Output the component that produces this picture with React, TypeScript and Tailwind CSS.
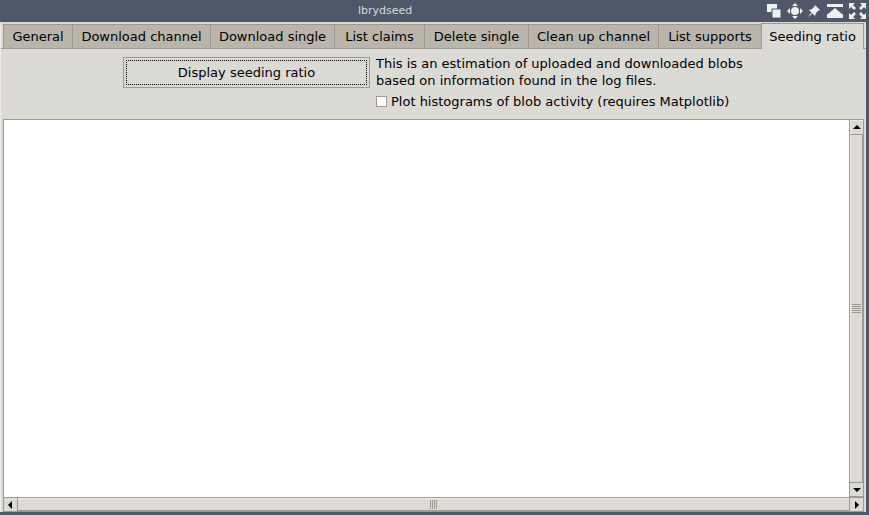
import React from "react";

const tabs = [
  { label: "General", w: 69 },
  { label: "Download channel", w: 138 },
  { label: "Download single", w: 124 },
  { label: "List claims", w: 90 },
  { label: "Delete single", w: 104 },
  { label: "Clean up channel", w: 130 },
  { label: "List supports", w: 103 },
  { label: "Seeding ratio", w: 103, active: true },
];

const TitleIcons = () => (
  <div className="absolute right-[3px] top-[3px] flex items-center gap-[5px]">
    <svg width="16" height="16" viewBox="0 0 16 16">
      <rect x="1" y="1" width="10" height="8" fill="#eef0f2" />
      <rect x="6" y="6" width="9" height="9" fill="#eef0f2" stroke="#4e5868" strokeWidth="1" />
    </svg>
    <svg width="16" height="16" viewBox="0 0 16 16" fill="#eef0f2">
      <circle cx="8" cy="8" r="4" />
      <path d="M8 0 L11 3 H5 Z M8 16 L5 13 H11 Z M0 8 L3 5 V11 Z M16 8 L13 11 V5 Z" />
    </svg>
    <svg width="13" height="14" viewBox="0 0 13 14" fill="#eef0f2">
      <path d="M7 1 L12 6 L10 7 L8 9 L7 12 L1 6 L4 5 L6 3 Z" />
      <path d="M3 9 L0 13 L4 10 Z" />
    </svg>
    <svg width="18" height="16" viewBox="0 0 18 16" fill="#eef0f2">
      <rect x="1" y="1" width="16" height="3" />
      <path d="M9 5 L16 11 H2 Z" />
      <rect x="1" y="11" width="16" height="4" />
    </svg>
    <svg width="17" height="16" viewBox="0 0 17 16" fill="#eef0f2">
      <path d="M0 0 H6 L4 2 L7 5 L5 7 L2 4 L0 6 Z" />
      <path d="M17 0 V6 L15 4 L12 7 L10 5 L13 2 L11 0 Z" />
      <path d="M0 16 V10 L2 12 L5 9 L7 11 L4 14 L6 16 Z" />
      <path d="M17 16 H11 L13 14 L10 11 L12 9 L15 12 L17 10 Z" />
    </svg>
  </div>
);

const Arrow = ({ dir }: { dir: "up" | "down" | "left" | "right" }) => {
  const d = {
    up: "M1 6 L5 2 L9 6 Z",
    down: "M1 3 L9 3 L5 7 Z",
    left: "M6 1 L6 9 L2 5 Z",
    right: "M3 1 L7 5 L3 9 Z",
  }[dir];
  return (
    <svg width="10" height="10" viewBox="0 0 10 10">
      <path d={d} fill="#000" />
    </svg>
  );
};

const App = () => {
  return (
    <div
      className="w-[869px] h-[515px] bg-[#4e5868] flex flex-col overflow-hidden text-[13px] text-black"
      style={{ fontFamily: '"DejaVu Sans", sans-serif' }}
    >
      {/* title bar */}
      <div className="relative h-[22px] shrink-0">
        <span className="absolute left-[358px] top-[4px] text-[11px] leading-[13px] text-[#d4d8de]">
          lbrydseed
        </span>
        <TitleIcons />
      </div>

      {/* window */}
      <div className="w-[866px] h-[490px] bg-[#dcdad5] border-l border-[#eeebe7] flex flex-col">
        {/* tabs */}
        <div className="h-[26px] shrink-0 flex items-end pl-[2px]">
          {tabs.map((t) =>
            t.active ? (
              <div
                key={t.label}
                style={{ width: t.w }}
                className="h-[26px] bg-[#dcdad5] border-t border-l border-r border-[#9e9a91] flex items-center justify-center leading-[16px] relative top-[1px]"
              >
                {t.label}
              </div>
            ) : (
              <div
                key={t.label}
                style={{ width: t.w }}
                className="h-[24px] bg-[#bab5ab] border-t border-l border-[#9e9a91] flex items-center justify-center leading-[16px] pt-[1px]"
              >
                {t.label}
              </div>
            )
          )}
        </div>

        {/* panel */}
        <div className="flex-1 flex flex-col border-t border-[#9e9a91] px-[2px]">
          {/* controls */}
          <div className="h-[70px] shrink-0 flex items-start pl-[120px]">
            <button className="mt-[8px] w-[247px] h-[31px] bg-[#dcdad5] border border-[#9e9a91] p-[2px]">
              <div className="w-full h-full border border-dotted border-black flex items-center justify-center leading-[16px]">
                Display seeding ratio
              </div>
            </button>
            <div className="ml-[6px] mt-[6px] flex flex-col leading-[17px]">
              <span>This is an estimation of uploaded and downloaded blobs</span>
              <span>based on information found in the log files.</span>
              <label className="mt-[4px] flex items-center">
                <span className="w-[11px] h-[11px] bg-white border border-[#9e9a91] mr-[4px]" />
                Plot histograms of blob activity (requires Matplotlib)
              </label>
            </div>
          </div>

          {/* text area with scrollbars */}
          <div className="flex-1 flex flex-col">
            <div className="flex-1 flex">
              <div className="flex-1 bg-white border-t border-l border-[#9e9a91]" />
              <div className="w-[15px] flex flex-col bg-[#bab5ab] border border-[#9e9a91]">
                <div className="h-[15px] shrink-0 bg-[#dcdad5] border-t border-l border-[#eeebe7] border-b border-b-[#9e9a91] flex items-center justify-center">
                  <Arrow dir="up" />
                </div>
                <div className="flex-1 bg-[#dcdad5] border-l border-[#eeebe7] border-r border-r-[#9e9a91] flex items-center justify-center">
                  <div className="flex flex-col gap-[1px]">
                    <div className="w-[9px] h-[1px] bg-[#9e9a91]" />
                    <div className="w-[9px] h-[1px] bg-[#9e9a91]" />
                    <div className="w-[9px] h-[1px] bg-[#9e9a91]" />
                    <div className="w-[9px] h-[1px] bg-[#9e9a91]" />
                    <div className="w-[9px] h-[1px] bg-[#9e9a91]" />
                  </div>
                </div>
                <div className="h-[14px] shrink-0 bg-[#dcdad5] border-t border-[#9e9a91] flex items-center justify-center">
                  <Arrow dir="down" />
                </div>
              </div>
            </div>
            <div className="h-[15px] shrink-0 flex bg-[#bab5ab] border border-[#9e9a91]">
              <div className="w-[14px] shrink-0 bg-[#dcdad5] border-r border-[#9e9a91] flex items-center justify-center">
                <Arrow dir="left" />
              </div>
              <div className="flex-1 bg-[#dcdad5] border-t border-[#eeebe7] border-b border-b-[#9e9a91] flex items-center justify-center">
                <div className="flex gap-[1px]">
                  <div className="w-[1px] h-[9px] bg-[#9e9a91]" />
                  <div className="w-[1px] h-[9px] bg-[#9e9a91]" />
                  <div className="w-[1px] h-[9px] bg-[#9e9a91]" />
                  <div className="w-[1px] h-[9px] bg-[#9e9a91]" />
                </div>
              </div>
              <div className="w-[14px] shrink-0 bg-[#dcdad5] border-l border-[#9e9a91] flex items-center justify-center">
                <Arrow dir="right" />
              </div>
            </div>
          </div>
        </div>
      </div>
    </div>
  );
};

export default App;
